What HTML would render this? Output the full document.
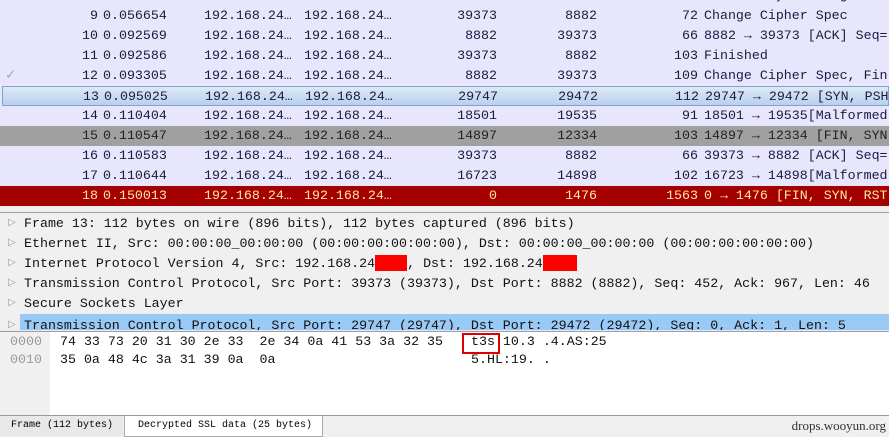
<!DOCTYPE html>
<html><head><meta charset="utf-8"><style>
html,body{margin:0;width:889px;height:437px;overflow:hidden}
body{background:#e7e6fc;position:relative;font-family:"Liberation Mono",monospace;font-size:13.3px;color:#1a1a40}
.r{position:absolute;left:0;width:889px;height:20px;line-height:20px;white-space:pre}
.r span{position:absolute}
.sel{background:linear-gradient(#dde9f6,#b9d0ea);border:1px solid #7ea4cf;box-sizing:border-box;left:2px!important;width:887px!important}
.g{background:#a0a0a0;color:#222}
.red{background:#a40000;color:#ffe9a0}
.d{position:absolute;left:0;top:212px;width:889px;height:117px;background:#f0f0f0;overflow:hidden;border-top:1px solid #a0a0a0}
.dl{position:absolute;left:0;width:889px;height:20px;line-height:20px;white-space:pre;color:#111}
.dl b{font-weight:normal;position:absolute;left:8px;color:#999;font-size:10px}
.dl i{font-style:normal;position:absolute;left:24px}
.h{position:absolute;left:0;top:331px;width:889px;height:84px;background:#fff;border-top:1px solid #a0a0a0}
.tabs{position:absolute;left:0;top:415px;width:889px;height:22px;overflow:hidden;background:#f0f0f0;border-top:1px solid #999;font-family:"Liberation Mono",monospace;font-size:10px;color:#000;white-space:nowrap}
</style></head><body>
<div class="r" style="top:-14px"><span style="right:791px">8</span><span style="left:103px">0.055777</span><span style="left:204px">192.168.24…</span><span style="left:304px">192.168.24…</span><span style="right:392px">39373</span><span style="right:292px">8882</span><span style="right:191px">333</span><span style="left:704px">Client Key Exchange</span></div>
<div class="r" style="top:6px"><span style="right:791px">9</span><span style="left:103px">0.056654</span><span style="left:204px">192.168.24…</span><span style="left:304px">192.168.24…</span><span style="right:392px">39373</span><span style="right:292px">8882</span><span style="right:191px">72</span><span style="left:704px">Change Cipher Spec</span></div>
<div class="r" style="top:26px"><span style="right:791px">10</span><span style="left:103px">0.092569</span><span style="left:204px">192.168.24…</span><span style="left:304px">192.168.24…</span><span style="right:392px">8882</span><span style="right:292px">39373</span><span style="right:191px">66</span><span style="left:704px">8882 → 39373 [ACK] Seq=</span></div>
<div class="r" style="top:46px"><span style="right:791px">11</span><span style="left:103px">0.092586</span><span style="left:204px">192.168.24…</span><span style="left:304px">192.168.24…</span><span style="right:392px">39373</span><span style="right:292px">8882</span><span style="right:191px">103</span><span style="left:704px">Finished</span></div>
<div class="r" style="top:66px"><span style="left:5px;color:#aaa">✓</span><span style="right:791px">12</span><span style="left:103px">0.093305</span><span style="left:204px">192.168.24…</span><span style="left:304px">192.168.24…</span><span style="right:392px">8882</span><span style="right:292px">39373</span><span style="right:191px">109</span><span style="left:704px">Change Cipher Spec, Fin</span></div>
<div class="r sel" style="top:86px"><span style="right:789px">13</span><span style="left:101px">0.095025</span><span style="left:202px">192.168.24…</span><span style="left:302px">192.168.24…</span><span style="right:390px">29747</span><span style="right:290px">29472</span><span style="right:189px">112</span><span style="left:702px">29747 → 29472 [SYN, PSH</span></div>
<div class="r" style="top:106px"><span style="right:791px">14</span><span style="left:103px">0.110404</span><span style="left:204px">192.168.24…</span><span style="left:304px">192.168.24…</span><span style="right:392px">18501</span><span style="right:292px">19535</span><span style="right:191px">91</span><span style="left:704px">18501 → 19535[Malformed</span></div>
<div class="r g" style="top:126px"><span style="right:791px">15</span><span style="left:103px">0.110547</span><span style="left:204px">192.168.24…</span><span style="left:304px">192.168.24…</span><span style="right:392px">14897</span><span style="right:292px">12334</span><span style="right:191px">103</span><span style="left:704px">14897 → 12334 [FIN, SYN</span></div>
<div class="r" style="top:146px"><span style="right:791px">16</span><span style="left:103px">0.110583</span><span style="left:204px">192.168.24…</span><span style="left:304px">192.168.24…</span><span style="right:392px">39373</span><span style="right:292px">8882</span><span style="right:191px">66</span><span style="left:704px">39373 → 8882 [ACK] Seq=</span></div>
<div class="r" style="top:166px"><span style="right:791px">17</span><span style="left:103px">0.110644</span><span style="left:204px">192.168.24…</span><span style="left:304px">192.168.24…</span><span style="right:392px">16723</span><span style="right:292px">14898</span><span style="right:191px">102</span><span style="left:704px">16723 → 14898[Malformed</span></div>
<div class="r red" style="top:186px"><span style="right:791px">18</span><span style="left:103px">0.150013</span><span style="left:204px">192.168.24…</span><span style="left:304px">192.168.24…</span><span style="right:392px">0</span><span style="right:292px">1476</span><span style="right:191px">1563</span><span style="left:704px">0 → 1476 [FIN, SYN, RST</span></div>
<div style="position:absolute;top:206px;left:0;width:889px;height:6px;background:#f0f0f0"></div>
<div class="d">
<div class="dl" style="top:1px"><b>▷</b><i>Frame 13: 112 bytes on wire (896 bits), 112 bytes captured (896 bits)</i></div>
<div class="dl" style="top:21px"><b>▷</b><i>Ethernet II, Src: 00:00:00_00:00:00 (00:00:00:00:00:00), Dst: 00:00:00_00:00:00 (00:00:00:00:00:00)</i></div>
<div class="dl" style="top:41px"><b>▷</b><i>Internet Protocol Version 4, Src: 192.168.24<span style="display:inline-block;width:32px;height:16px;background:#f00;vertical-align:middle"></span>, Dst: 192.168.24<span style="display:inline-block;width:34px;height:16px;background:#f00;vertical-align:middle"></span></i></div>
<div class="dl" style="top:61px"><b>▷</b><i>Transmission Control Protocol, Src Port: 39373 (39373), Dst Port: 8882 (8882), Seq: 452, Ack: 967, Len: 46</i></div>
<div class="dl" style="top:81px"><b>▷</b><i>Secure Sockets Layer</i></div>
<div class="dl" style="top:101px;left:20px;background:#99c9f5;width:869px;height:24px;line-height:24px"><b style="left:-12px">▷</b><i style="left:4px">Transmission Control Protocol, Src Port: 29747 (29747), Dst Port: 29472 (29472), Seq: 0, Ack: 1, Len: 5</i></div>
</div>
<div class="h">
<div style="position:absolute;left:0;top:0;width:50px;height:84px;background:#f0f0f0"></div>
<div class="dl" style="top:1px;height:18px;line-height:18px"><span style="position:absolute;left:10px;color:#999">0000</span><span style="position:absolute;left:60px">74 33 73 20 31 30 2e 33  2e 34 0a 41 53 3a 32 35</span><span style="position:absolute;left:471px">t3s 10.3 .4.AS:25</span></div>
<div class="dl" style="top:19px;height:18px;line-height:18px"><span style="position:absolute;left:10px;color:#999">0010</span><span style="position:absolute;left:60px">35 0a 48 4c 3a 31 39 0a  0a</span><span style="position:absolute;left:471px">5.HL:19. .</span></div>
<div style="position:absolute;left:462px;top:1px;width:34px;height:17px;border:2px solid #e00000"></div>
</div>
<div class="tabs">
<div style="position:absolute;left:0;top:0;width:123px;height:20px;line-height:20px;padding-left:11px;box-sizing:border-box;background:#e8e8e8">Frame (112 bytes)</div>
<div style="position:absolute;left:124px;top:-1px;width:199px;height:22px;line-height:22px;padding-left:13px;box-sizing:border-box;background:#fff;border:1px solid #aaa;border-top:none">Decrypted SSL data (25 bytes)</div>
<div style="position:absolute;right:3px;top:0;line-height:20px;font-family:'Liberation Serif',serif;font-size:13px;color:#333">drops.wooyun.org</div>
</div>
</body></html>
